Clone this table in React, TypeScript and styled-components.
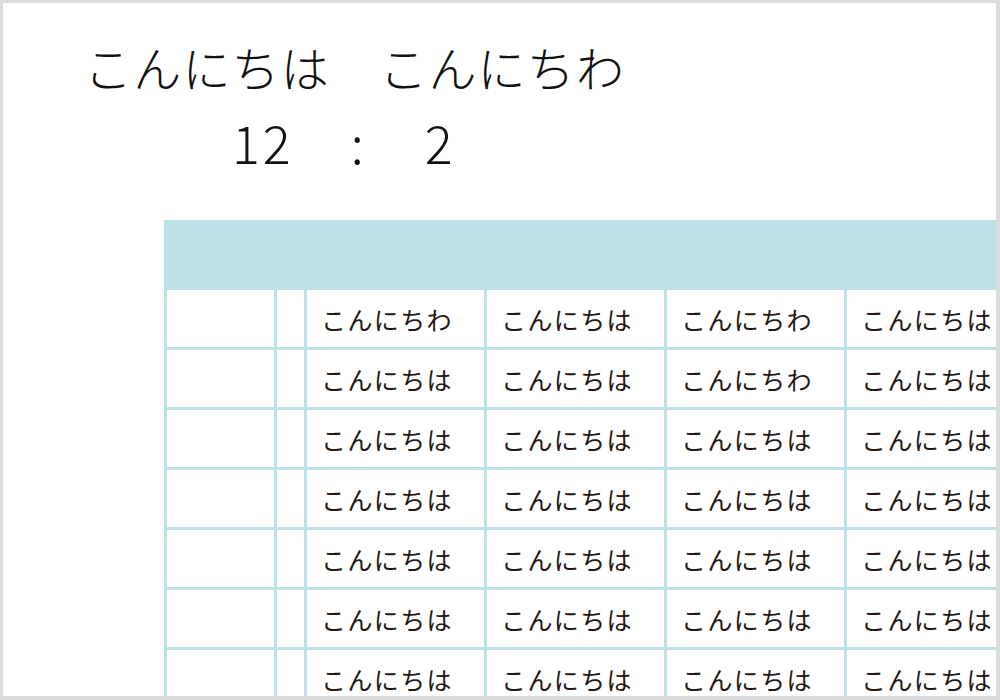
import React from 'react'
import styled, { createGlobalStyle } from 'styled-components'

const GlobalStyle = createGlobalStyle`
  html, body {
    margin: 0;
    padding: 0;
    background: #dcdcdc;
  }
`

const Frame = styled.div`
  box-sizing: border-box;
  margin: 3px 4px 0 3px;
  width: 993px;
  height: 693px;
  background: #fff;
  overflow: hidden;
  font-family: 'Noto Sans CJK JP', 'Noto Sans', sans-serif;
  color: #111;
`

const Heading = styled.div`
  padding: 37px 0 0 81px;
  font-size: 48px;
  font-weight: 300;
  line-height: 52px;
  letter-spacing: 1.2px;
  white-space: nowrap;
`

const Score = styled.div`
  display: flex;
  align-items: baseline;
  padding: 22px 0 0 229px;
  font-size: 52px;
  font-weight: 300;
  line-height: 56px;
`

const ScoreNum = styled.span<{ $gap?: number }>`
  letter-spacing: 3px;
  margin-left: ${(p) => p.$gap ?? 0}px;
`

const Table = styled.div`
  display: grid;
  grid-template-columns: 107px 27px repeat(4, 177px);
  gap: 3px;
  width: max-content;
  margin: 50px 0 0 161px;
  padding-left: 3px;
  background: #bce2e8;
`

const HeaderBand = styled.div`
  grid-column: 1 / -1;
  height: 67px;
  background: #bce2e8;
`

const Cell = styled.div`
  display: flex;
  align-items: center;
  height: 57px;
  padding-left: 14px;
  background: #fff;
  font-size: 25px;
  color: #231815;
  letter-spacing: 1.4px;
`

const rows = [
  ['こんにちわ', 'こんにちは', 'こんにちわ', 'こんにちは'],
  ['こんにちは', 'こんにちは', 'こんにちわ', 'こんにちは'],
  ['こんにちは', 'こんにちは', 'こんにちは', 'こんにちは'],
  ['こんにちは', 'こんにちは', 'こんにちは', 'こんにちは'],
  ['こんにちは', 'こんにちは', 'こんにちは', 'こんにちは'],
  ['こんにちは', 'こんにちは', 'こんにちは', 'こんにちは'],
  ['こんにちは', 'こんにちは', 'こんにちは', 'こんにちは'],
]

const App: React.FC = () => {
  return (
    <>
      <GlobalStyle />
      <Frame>
        <Heading>こんにちは　こんにちわ</Heading>
        <Score>
          <ScoreNum>12</ScoreNum>
          <ScoreNum $gap={57}>:</ScoreNum>
          <ScoreNum $gap={58}>2</ScoreNum>
        </Score>
        <Table>
          <HeaderBand />
          {rows.map((row, i) => (
            <React.Fragment key={i}>
              <Cell />
              <Cell />
              {row.map((text, j) => (
                <Cell key={j}>{text}</Cell>
              ))}
            </React.Fragment>
          ))}
        </Table>
      </Frame>
    </>
  )
}

export default App
